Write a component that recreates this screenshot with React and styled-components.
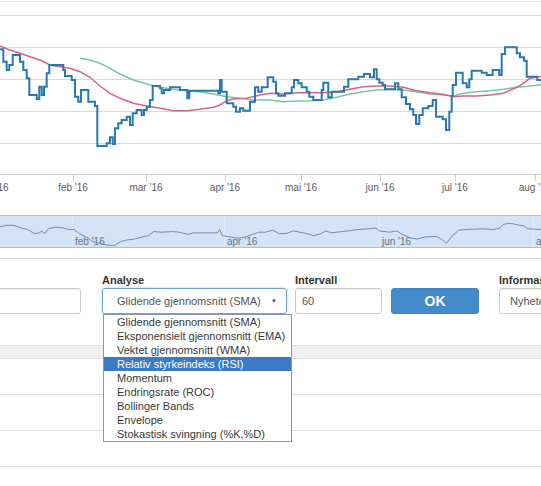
import React from 'react';
import styled, { createGlobalStyle } from 'styled-components';

const GlobalStyle = createGlobalStyle`
  html, body {
    margin: 0;
    padding: 0;
    background: #fff;
  }
  body {
    font-family: "Liberation Sans", Arial, sans-serif;
    overflow: hidden;
  }
`;

// price series, traced in 3x units (x 0..1623, y 0..600)
const PRICE_START = [0, 148];
const PRICE_STEPS = [
  10, 185, 20, 210, 28, 195, 38, 165, 60, 185, 70, 210, 80, 235, 88, 285, 110, 297, 118, 260,
  125, 285, 132, 260, 140, 220, 148, 195, 190, 210, 195, 228, 215, 240, 225, 290, 235, 305,
  243, 270, 265, 305, 285, 318, 292, 438, 320, 430, 330, 412, 338, 432, 345, 385, 355, 370,
  365, 360, 380, 350, 390, 375, 398, 340, 410, 330, 425, 345, 432, 330, 440, 320, 450, 300,
  458, 258, 480, 265, 485, 280, 492, 270, 510, 262, 540, 270, 562, 295, 568, 272, 655, 280,
  660, 240, 665, 275, 680, 310, 700, 320, 708, 335, 720, 325, 730, 332, 750, 305, 765, 262,
  775, 275, 785, 262, 803, 232, 820, 245, 828, 280, 835, 287, 855, 280, 875, 262, 882, 240,
  895, 250, 905, 262, 920, 275, 928, 290, 940, 300, 965, 270, 970, 248, 985, 292, 995, 275,
  1032, 260, 1045, 238, 1075, 230, 1092, 222, 1110, 232, 1122, 208, 1130, 238, 1138, 248,
  1148, 255, 1155, 268, 1185, 250, 1195, 268, 1205, 292, 1218, 312, 1230, 328, 1240, 345,
  1248, 372, 1258, 345, 1268, 325, 1285, 318, 1298, 300, 1308, 350, 1328, 358, 1338, 390,
  1348, 335, 1355, 288, 1358, 255, 1368, 218, 1388, 250, 1400, 262, 1408, 238, 1415, 212,
  1445, 218, 1460, 225, 1478, 210, 1498, 225, 1505, 162, 1515, 142, 1550, 160, 1560, 172,
  1572, 182, 1580, 230, 1612, 240, 1625,
];

const SMA_LONG = [
  [0, 138], [30, 150], [60, 160], [90, 170], [120, 180], [150, 195], [180, 200], [210, 205],
  [240, 215], [270, 232], [300, 258], [330, 280], [360, 295], [400, 310], [440, 318],
  [480, 325], [520, 332], [560, 332], [600, 328], [640, 322], [660, 315], [680, 302],
  [700, 297], [740, 295], [780, 285], [810, 280], [850, 282], [890, 278], [930, 278],
  [970, 278], [1010, 275], [1050, 268], [1090, 260], [1130, 258], [1170, 258], [1210, 262],
  [1250, 272], [1290, 278], [1330, 283], [1360, 290], [1390, 288], [1430, 288], [1470, 285],
  [1510, 280], [1550, 262], [1570, 250], [1590, 235], [1610, 232], [1625, 228],
];

const SMA_SHORT = [
  [240, 175], [270, 180], [300, 190], [330, 205], [360, 222], [400, 240], [440, 252],
  [480, 262], [520, 268], [560, 272], [600, 275], [640, 282], [680, 290], [720, 295],
  [760, 300], [810, 300], [850, 305], [890, 303], [930, 302], [970, 300], [1010, 292],
  [1050, 282], [1090, 275], [1130, 270], [1170, 268], [1210, 270], [1250, 275], [1290, 282],
  [1330, 285], [1360, 288], [1390, 280], [1430, 275], [1470, 272], [1510, 268], [1550, 262],
  [1590, 258], [1625, 254],
];

// navigator overview, traced at 2.9x
const OVERVIEW = [
  [0, 92], [20, 88], [40, 88], [60, 95], [80, 100], [100, 112], [115, 110], [120, 104],
  [130, 112], [140, 98], [160, 93], [180, 95], [200, 100], [215, 100], [230, 112], [250, 122],
  [270, 135], [290, 140], [310, 145], [330, 147], [350, 135], [370, 130], [390, 128],
  [410, 122], [430, 118], [445, 106], [470, 108], [500, 106], [520, 108], [545, 114],
  [560, 110], [630, 110], [637, 100], [645, 118], [670, 122], [690, 125], [710, 122],
  [730, 115], [750, 108], [770, 108], [790, 102], [810, 112], [830, 112], [850, 104],
  [870, 108], [890, 112], [910, 118], [930, 112], [945, 104], [960, 110], [990, 106],
  [1010, 104], [1040, 100], [1070, 98], [1090, 96], [1100, 104], [1130, 108], [1150, 104],
  [1170, 116], [1190, 124], [1210, 128], [1230, 122], [1265, 120], [1280, 128], [1295, 140],
  [1310, 120], [1330, 102], [1350, 100], [1400, 98], [1430, 100], [1450, 96], [1460, 85],
  [1480, 82], [1500, 86], [1520, 90], [1530, 98], [1570, 100],
];

const GRID_Y = [15, 47, 79, 111, 143];
const MONTHS = [
  { label: "jan '16", x: -6 },
  { label: "feb '16", x: 73 },
  { label: "mar '16", x: 146 },
  { label: "apr '16", x: 225 },
  { label: "mai '16", x: 301 },
  { label: "jun '16", x: 380 },
  { label: "jul '16", x: 455 },
  { label: "aug '16", x: 535 },
];
const NAV_MONTHS = [
  { label: "feb '16", x: 72 },
  { label: "apr '16", x: 224 },
  { label: "jun '16", x: 379 },
  { label: "aug '16", x: 533 },
];

const ANALYSES = [
  'Glidende gjennomsnitt (SMA)',
  'Eksponensielt gjennomsnitt (EMA)',
  'Vektet gjennomsnitt (WMA)',
  'Relativ styrkeindeks (RSI)',
  'Momentum',
  'Endringsrate (ROC)',
  'Bollinger Bands',
  'Envelope',
  'Stokastisk svingning (%K,%D)',
];

const stepPath = (start, steps) => {
  let d = `M${start[0] / 3} ${start[1] / 3}`;
  steps.forEach((v, i) => {
    d += i % 2 === 0 ? ` H${(v / 3).toFixed(1)}` : ` V${(v / 3).toFixed(1)}`;
  });
  return d;
};

const linePoints = (pts, scale, dy = 0) =>
  pts.map(([x, y]) => `${(x / scale).toFixed(1)},${(y / scale + dy).toFixed(1)}`).join(' ');

const Page = styled.div`
  width: 541px;
  overflow: hidden;
`;

const ChartSvg = styled.svg`
  display: block;
  font-family: "Liberation Sans", Arial, sans-serif;
`;

const Navigator = styled.div`
  margin-top: 15px;
  height: 31px;
  background: #d4e3f5;
  border-top: 1px solid #b3bccb;
  border-bottom: 1px solid #b3bccb;
`;

const Divider = styled.div`
  margin-top: 10px;
  height: 1px;
  background: #dcdcdc;
`;

const FormRow = styled.div`
  display: flex;
  align-items: flex-end;
  margin-top: 15px;
  margin-left: -19px;
`;

const Field = styled.div`
  position: relative;
  flex: none;
  width: ${p => p.$w}px;
  margin-left: ${p => p.$ml || 0}px;
`;

const Label = styled.div`
  height: 14px;
  font-size: 11px;
  font-weight: bold;
  color: #333;
  white-space: nowrap;
`;

const Input = styled.div`
  box-sizing: border-box;
  height: 26px;
  padding: 0 ${p => p.$pad || 6}px;
  border: 1px solid #ccc;
  border-radius: 3px;
  box-shadow: inset 0 1px 1px rgba(0, 0, 0, 0.06);
  font-size: 11px;
  line-height: 24px;
  color: #555;
  white-space: nowrap;
`;

const Select = styled(Input)`
  display: flex;
  justify-content: space-between;
  padding: 0 9px 0 14px;
  border-color: ${p => (p.$focus ? '#6fa3d8' : '#ccc')};
  box-shadow: ${p => (p.$focus ? '0 0 3px rgba(102, 175, 233, 0.6)' : 'inset 0 1px 1px rgba(0, 0, 0, 0.06)')};
`;

const Caret = styled.span`
  font-size: 6px;
  color: #444;
`;

const Button = styled.div`
  box-sizing: border-box;
  height: 26px;
  border-radius: 3px;
  background: #428bca;
  border: 1px solid #3f85c2;
  color: #fff;
  font-size: 14px;
  font-weight: bold;
  line-height: 24px;
  text-align: center;
`;

const Dropdown = styled.ul`
  position: absolute;
  top: 100%;
  left: 1px;
  z-index: 2;
  width: 189px;
  box-sizing: border-box;
  margin: 0;
  padding: 0;
  list-style: none;
  background: #fff;
  border: 1px solid #8797ae;
`;

const Option = styled.li`
  height: 14px;
  padding-left: 13px;
  font-size: 11px;
  line-height: 14px;
  white-space: nowrap;
  color: ${p => (p.$active ? '#fff' : '#3a3a3a')};
  background: ${p => (p.$active ? '#3b7ac6' : 'transparent')};
`;

const Table = styled.div`
  margin-top: 31px;
`;

const TableHead = styled.div`
  height: 12px;
  background: #f0f0f0;
  border-top: 1px solid #dedede;
  border-bottom: 1px solid #dedede;
`;

const TableRow = styled.div`
  height: 35px;
  border-bottom: 1px solid #dedede;
`;

function PriceChart() {
  return (
    <ChartSvg width="541" height="200" viewBox="0 0 541 200">
      <line x1="0" x2="541" y1="1.5" y2="1.5" stroke="#e4e4e4" />
      {GRID_Y.map(y => (
        <line key={y} x1="0" x2="541" y1={y + 0.5} y2={y + 0.5} stroke="#d9d9d9" />
      ))}
      <line x1="0" x2="541" y1="174.5" y2="174.5" stroke="#cfcfcf" />
      {MONTHS.map(m => (
        <g key={m.label}>
          <line x1={m.x + 0.5} x2={m.x + 0.5} y1="175" y2="181" stroke="#cfcfcf" />
          <text x={m.x} y="191" textAnchor="middle" fontSize="10" fill="#606060">
            {m.label}
          </text>
        </g>
      ))}
      <polyline points={linePoints(SMA_SHORT, 3)} fill="none" stroke="#7ac6a0" strokeWidth="1.5" />
      <polyline points={linePoints(SMA_LONG, 3)} fill="none" stroke="#d9628a" strokeWidth="1.5" />
      <path d={stepPath(PRICE_START, PRICE_STEPS)} fill="none" stroke="#2779b0" strokeWidth="2" strokeLinejoin="miter" />
    </ChartSvg>
  );
}

function Overview() {
  return (
    <Navigator>
      <ChartSvg width="541" height="31" viewBox="0 0 541 31">
        {NAV_MONTHS.map(m => (
          <g key={m.label}>
            <line x1={m.x + 0.5} x2={m.x + 0.5} y1="0" y2="31" stroke="#e2ecf8" />
            <text x={m.x + 3} y="29" fontSize="10" fill="#6b7480">
              {m.label}
            </text>
          </g>
        ))}
        <polyline points={linePoints(OVERVIEW, 2.9, -21)} fill="none" stroke="#6e8fb6" strokeWidth="1" />
      </ChartSvg>
    </Navigator>
  );
}

export default function App() {
  return (
    <Page>
      <GlobalStyle />
      <PriceChart />
      <Overview />
      <Divider />
      <FormRow>
        <Field $w={100}>
          <Label />
          <Input />
        </Field>
        <Field $w={185} $ml={21}>
          <Label>Analyse</Label>
          <Select $focus>
            <span>Glidende gjennomsnitt (SMA)</span>
            <Caret>▼</Caret>
          </Select>
          <Dropdown>
            {ANALYSES.map((a, i) => (
              <Option key={a} $active={i === 3}>
                {a}
              </Option>
            ))}
          </Dropdown>
        </Field>
        <Field $w={87} $ml={8}>
          <Label>Intervall</Label>
          <Input>60</Input>
        </Field>
        <Field $w={88} $ml={9}>
          <Button>OK</Button>
        </Field>
        <Field $w={120} $ml={20}>
          <Label>Informasjon</Label>
          <Input $pad={10}>Nyheter</Input>
        </Field>
      </FormRow>
      <Table>
        <TableHead />
        <TableRow />
        <TableRow />
        <TableRow />
      </Table>
    </Page>
  );
}
